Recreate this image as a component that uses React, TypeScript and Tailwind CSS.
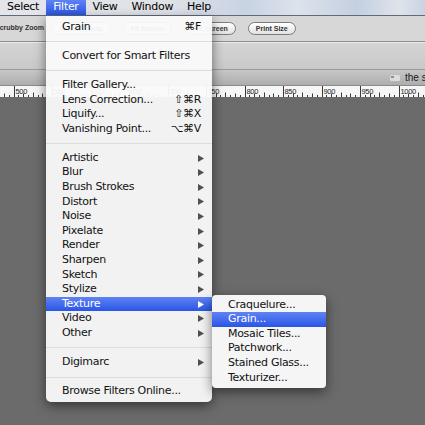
import React from "react";

type Row =
  | { kind: "item"; label: string; shortcut?: string; sub?: boolean; active?: boolean }
  | { kind: "sep" };

const filterRows: Row[] = [
  { kind: "item", label: "Grain", shortcut: "⌘F" },
  { kind: "sep" },
  { kind: "item", label: "Convert for Smart Filters" },
  { kind: "sep" },
  { kind: "item", label: "Filter Gallery..." },
  { kind: "item", label: "Lens Correction...", shortcut: "⇧⌘R" },
  { kind: "item", label: "Liquify...", shortcut: "⇧⌘X" },
  { kind: "item", label: "Vanishing Point...", shortcut: "⌥⌘V" },
  { kind: "sep" },
  { kind: "item", label: "Artistic", sub: true },
  { kind: "item", label: "Blur", sub: true },
  { kind: "item", label: "Brush Strokes", sub: true },
  { kind: "item", label: "Distort", sub: true },
  { kind: "item", label: "Noise", sub: true },
  { kind: "item", label: "Pixelate", sub: true },
  { kind: "item", label: "Render", sub: true },
  { kind: "item", label: "Sharpen", sub: true },
  { kind: "item", label: "Sketch", sub: true },
  { kind: "item", label: "Stylize", sub: true },
  { kind: "item", label: "Texture", sub: true, active: true },
  { kind: "item", label: "Video", sub: true },
  { kind: "item", label: "Other", sub: true },
  { kind: "sep" },
  { kind: "item", label: "Digimarc", sub: true },
  { kind: "sep" },
  { kind: "item", label: "Browse Filters Online..." },
];

const textureRows: Row[] = [
  { kind: "item", label: "Craquelure..." },
  { kind: "item", label: "Grain...", active: true },
  { kind: "item", label: "Mosaic Tiles..." },
  { kind: "item", label: "Patchwork..." },
  { kind: "item", label: "Stained Glass..." },
  { kind: "item", label: "Texturizer..." },
];

function Arrow({ white }: { white?: boolean }) {
  return (
    <svg width="6" height="7" viewBox="0 0 6 7">
      <path d="M0 0L6 3.5L0 7Z" fill={white ? "#ffffff" : "#505050"} />
    </svg>
  );
}

function MenuRows({ rows }: { rows: Row[] }) {
  return (
    <>
      {rows.map((r, i) =>
        r.kind === "sep" ? (
          <div key={i} className="flex h-[14.6px] items-center">
            <div className="h-px w-full bg-[#dcdcdc]" />
          </div>
        ) : (
          <div
            key={i}
            className={`flex h-[14.6px] items-center justify-between pl-4 ${
              r.sub ? "pr-[8.5px]" : "pr-[11px]"
            } ${
              r.active
                ? "bg-linear-to-b from-[#5f83f4] to-[#2a54e6] text-white"
                : "text-[#111]"
            }`}
          >
            <span className="whitespace-nowrap">{r.label}</span>
            {r.shortcut ? <span className="whitespace-nowrap">{r.shortcut}</span> : null}
            {r.sub ? <Arrow white={r.active} /> : null}
          </div>
        )
      )}
    </>
  );
}

function Ruler() {
  const ticks: React.ReactNode[] = [];
  const labels: React.ReactNode[] = [];
  const step = 38.5 / 8;
  for (let i = -3; i < 86; i++) {
    const x = 13.5 + i * step;
    const px = Math.round(x) + 0.5;
    const m = ((i % 8) + 8) % 8;
    const h = m === 0 ? 11 : m === 4 ? 4.5 : m % 2 === 0 ? 3.5 : 2;
    ticks.push(<line key={i} x1={px} x2={px} y1={11 - h} y2={11} stroke="#3a3a3a" strokeWidth="1" />);
    if (m === 0) {
      labels.push(
        <text
          key={"t" + i}
          x={px + 1}
          y={7.6}
          fontSize="7.5"
          fontFamily="'Liberation Sans', Arial, sans-serif"
          fill="#222"
        >
          {500 + (i / 8) * 50}
        </text>
      );
    }
  }
  return (
    <svg width="425" height="11" viewBox="0 0 425 11" className="block">
      {ticks}
      {labels}
    </svg>
  );
}

const pill =
  "flex h-[13px] items-center rounded-full border border-[#7b7b7b] bg-linear-to-b from-white to-[#e2e2e2] px-[7px] text-[7px] font-bold leading-none text-[#333] whitespace-nowrap";

export default function App() {
  return (
    <div className="relative flex h-[425px] w-[425px] flex-col overflow-hidden bg-[#6b6b6b] font-['DejaVu_Sans',sans-serif] text-[11px] tracking-[-0.3px]">
      {/* system menu bar */}
      <div className="flex h-4 shrink-0 items-stretch border-b border-[#5f6a7c] bg-[linear-gradient(to_right,#e4e6e9,#dfe2e7_40%,#c8d3e3_58%,#dde3eb_70%,#c4cfe0_84%,#dfe4eb_94%,#c9d3e2)] text-black">
        <div className="flex items-center px-[7px]">Select</div>
        <div className="flex items-center bg-linear-to-b from-[#5f83f4] to-[#2a54e6] px-[7px] text-white">
          Filter
        </div>
        <div className="flex items-center px-[7px]">View</div>
        <div className="flex items-center px-[7px]">Window</div>
        <div className="flex items-center px-[7px]">Help</div>
      </div>

      {/* tool options bar */}
      <div className="flex h-[26px] shrink-0 items-center border-b border-[#8d8d8d] bg-[#d7d7d7] font-['Liberation_Sans',Arial,sans-serif] tracking-normal">
        <span className="ml-[-5px] whitespace-nowrap text-[7px] font-bold text-[#333]">Scrubby Zoom</span>
        <div className="ml-[7px] flex gap-3">
          <div className={pill}>Actual Pixels</div>
          <div className={pill}>Fit Screen</div>
          <div className={pill}>Fill Screen</div>
          <div className={pill}>Print Size</div>
        </div>
      </div>

      {/* application strip */}
      <div className="h-[28px] shrink-0 border-t border-[#ececec] border-b border-b-[#9a9a9a] bg-linear-to-b from-[#d4d4d4] to-[#c9c9c9]" />

      {/* document tab */}
      <div className="flex h-4 shrink-0 items-center gap-[5px] overflow-hidden whitespace-nowrap border-b border-[#8a8a8a] bg-linear-to-b from-[#c7c7c7] to-[#adadad] pl-[390px] font-['Liberation_Sans',Arial,sans-serif] text-[10px] tracking-normal text-[#1a1a1a]">
        <svg width="10" height="6" viewBox="0 0 10 6" className="shrink-0">
          <rect x="0" y="0" width="10" height="6" rx="1.5" fill="#dcdcdc" />
          <rect x="1" y="1" width="3" height="2" fill="#8e8e8e" />
        </svg>
        <span>the sky.psd @ 66.7%</span>
      </div>

      {/* ruler */}
      <div className="h-[11px] shrink-0 bg-[#f6f6f6]">
        <Ruler />
      </div>

      {/* canvas area */}
      <div className="flex-1 bg-[#6b6b6b]" />

      {/* Filter menu */}
      <div className="absolute left-[46px] top-4 w-[166px] rounded-b-[5px] bg-[rgba(250,250,250,0.95)] py-[3.5px] shadow-[0_4px_12px_rgba(0,0,0,0.5)]">
        <MenuRows rows={filterRows} />
      </div>

      {/* Texture submenu */}
      <div className="absolute left-[212px] top-[294.5px] w-[114px] rounded-[4px] bg-[rgba(250,250,250,0.97)] py-[3px] shadow-[0_4px_12px_rgba(0,0,0,0.5)]">
        <MenuRows rows={textureRows} />
      </div>
    </div>
  );
}
